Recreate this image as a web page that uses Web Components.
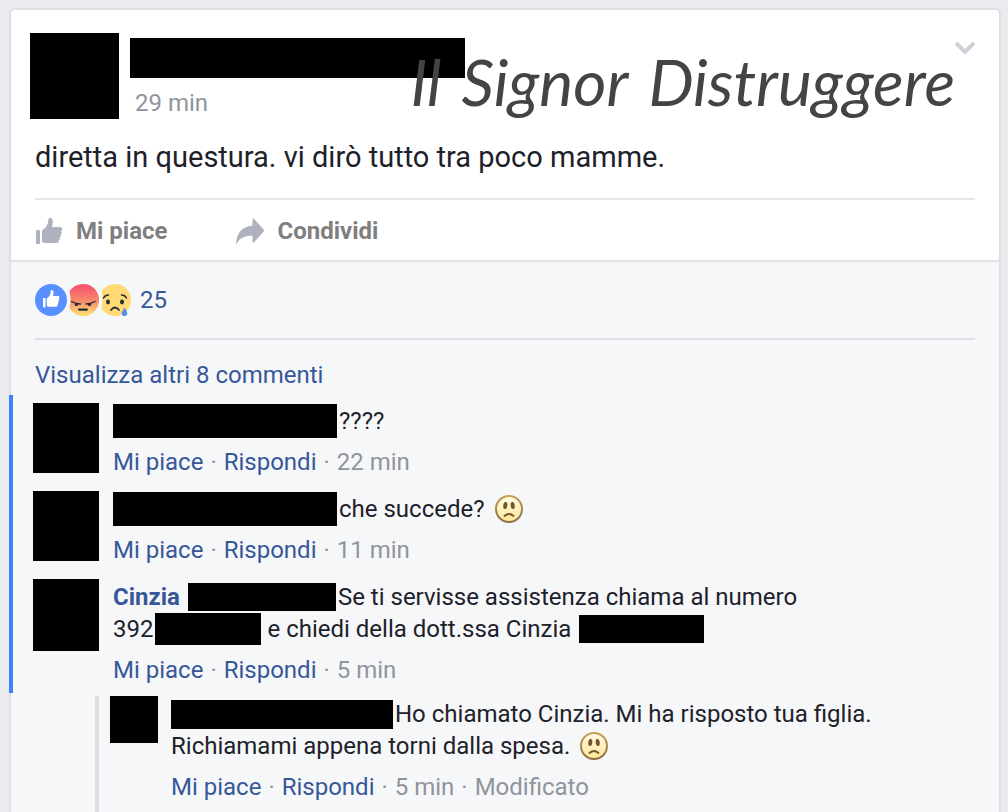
<!DOCTYPE html>
<html lang="it">
<head>
<meta charset="utf-8">
<title>Post</title>
<style>
    body {
        margin: 0;
        min-height: 100vh;
        box-sizing: border-box;
        padding: 8px 7px 0 9px;
        display: flex;
        flex-direction: column;
        background: #e9ebee;
        color: #1d2129;
        font: 24px/32px Roboto, "Liberation Sans", sans-serif;
    }
</style>
</head>
<body>
<post-card>
    <post-header slot="header" time="29 min"></post-header>
    <word-mark slot="mark"><span>Il</span><span>Signor</span><span>Distruggere</span></word-mark>
    <span slot="text">diretta in questura. vi dirò tutto tra poco mamme.</span>
    <post-actions slot="actions"></post-actions>
    <reaction-bar slot="feedback" count="25"></reaction-bar>
    <comment-list slot="feedback">
        <comment-item style="--avatar-h: 70px">
            <comment-line><redacted-box style="--w: 224px; --h: 34px"></redacted-box>????</comment-line>
            <comment-actions slot="actions" time="22 min"></comment-actions>
        </comment-item>
        <comment-item style="--avatar-h: 70px">
            <comment-line><redacted-box style="--w: 224px; --h: 34px"></redacted-box>che succede? <sad-face></sad-face></comment-line>
            <comment-actions slot="actions" time="11 min"></comment-actions>
        </comment-item>
        <comment-item style="--avatar-h: 72px">
            <comment-line><user-link>Cinzia</user-link><redacted-box space="before" style="--w: 148px; --h: 28px"></redacted-box>Se ti servisse assistenza chiama al numero</comment-line>
            <comment-line>392<redacted-box space="after" style="--w: 106px; --h: 32px"></redacted-box>e chiedi della dott.ssa Cinzia<redacted-box space="before" style="--w: 125px; --h: 28px"></redacted-box></comment-line>
            <comment-actions slot="actions" time="5 min"></comment-actions>
        </comment-item>
        <comment-item slot="replies" style="--avatar-w: 48px; --avatar-h: 47px; --gap: 13px">
            <comment-line><redacted-box style="--w: 222px; --h: 29px"></redacted-box>Ho chiamato Cinzia. Mi ha risposto tua figlia.</comment-line>
            <comment-line>Richiamami appena torni dalla spesa. <sad-face></sad-face></comment-line>
            <comment-actions slot="actions" time="5 min" edited></comment-actions>
        </comment-item>
    </comment-list>
</post-card>

<script>
class BaseElement extends HTMLElement {
    constructor(){
        super();
        this.shadowDOM = this.attachShadow({mode: "open"});
    }
    connectedCallback(){
        this.shadowDOM.innerHTML = this.render();
    }
}

const thumb = `
    <rect x="0" y="12" width="4" height="14" rx="1"/>
    <path d="M6 13.5c0-1 .6-1.600 1.500-2.200 2.400-1.700 3.900-3.900 4.400-6.500l.5-3.300C12.600.5 13.200 0 14 0c1.700 0 2.800 1.500 2.800 3.700 0 2-.5 3.700-1.100 5.300H24c1.300 0 2.200.9 2.200 2 0 .9-.5 1.600-1.200 1.900.5.400.8 1 .8 1.600 0 1-.6 1.700-1.400 2 .3.300.5.800.5 1.300 0 .9-.6 1.600-1.300 1.900.2.300.3.700.3 1.100 0 .9-.6 1.600-1.400 1.800.2.300.2.600.2.900 0 .9-.8 1.500-2 1.500H8.500C7 25 6 24 6 22.500z"/>`;

class PostCard extends BaseElement {
    render() {
        return `
        <style>
            :host{
                position: relative;
                flex: 1;
                display: flex;
                flex-direction: column;
                border: 2px solid #dddfe2;
                border-bottom: 0;
                border-radius: 6px 6px 0 0;
                background: #fff;
            }
            .top{
                padding: 23px 24px 0 19px;
            }
            .text{
                margin: 20px 0 0 5px;
                font-size: 29px;
                line-height: 36px;
            }
            .actions{
                margin: 23px 0 0 5px;
                border-top: 2px solid #e5e5e5;
            }
            .feedback{
                flex: 1;
                border-top: 2px solid #e1e2e5;
                background: #f6f7f9;
            }
            .menu{
                position: absolute;
                top: 26px;
                right: 20px;
                width: 28px;
                height: 24px;
                padding: 0;
                border: 0;
                background: none;
            }
        </style>
        <div class="top">
            <slot name="header"></slot>
            <div class="text"><slot name="text"></slot></div>
            <div class="actions"><slot name="actions"></slot></div>
        </div>
        <div class="feedback"><slot name="feedback"></slot></div>
        <slot name="mark"></slot>
        <button class="menu" aria-label="Opzioni">
            <svg width="28" height="24" viewBox="0 0 28 24" fill="none" stroke="#cdd0d6" stroke-width="4"><path d="M5 7l9 9 9-9"/></svg>
        </button>
        `;
    }
}

class PostHeader extends BaseElement {
    render() {
        return `
        <style>
            :host{
                display: flex;
                gap: 11px;
            }
            .avatar{
                width: 89px;
                height: 86px;
                background: #000;
            }
            .name{
                width: 335px;
                height: 40px;
                margin-top: 5px;
                background: #000;
            }
            .time{
                display: block;
                margin: 9px 0 0 5px;
                color: #90949c;
            }
        </style>
        <div class="avatar"></div>
        <div>
            <div class="name"></div>
            <span class="time">${this.getAttribute("time")}</span>
        </div>
        `;
    }
}

class WordMark extends BaseElement {
    render() {
        return `
        <style>
            :host{
                position: absolute;
                top: 36px;
                right: 44px;
                display: flex;
                gap: 20px;
                color: #444;
                font: italic 400 64px/72px Lato, sans-serif;
                white-space: nowrap;
                pointer-events: none;
            }
        </style>
        <slot></slot>
        `;
    }
}

class PostActions extends BaseElement {
    render() {
        return `
        <style>
            :host{
                display: flex;
                gap: 67px;
                height: 61px;
                margin-bottom: -1px;
                align-items: center;
            }
            button{
                display: flex;
                align-items: center;
                gap: 13px;
                padding: 0;
                border: 0;
                background: none;
                color: #7f7f7f;
                font: inherit;
                font-weight: 700;
            }
            svg{
                fill: #adb2bd;
            }
        </style>
        <button><svg width="28" height="26" viewBox="-1 0 28 26">${thumb}</svg>Mi piace</button>
        <button><svg width="30" height="26" viewBox="0 0 30 26"><path d="M17.500 1.500c0-1 .9-1.300 1.600-.6l9.500 10.600c.6.700.6 1.300 0 2L19.100 24.200c-.7.700-1.600.4-1.600-.6v-5.900C9.500 17.500 4.800 20 2 25.300c-.3.500-.9.300-.9-.3C1.600 15 7.500 8.200 17.500 7.400z"/></svg>Condividi</button>
        `;
    }
}

class ReactionBar extends BaseElement {
    render() {
        return `
        <style>
            :host{
                display: flex;
                align-items: center;
                height: 76px;
                margin: 0 24px;
                border-bottom: 2px solid #dfe1e5;
            }
            a{
                margin-left: 9px;
                color: #365899;
                text-decoration: none;
            }
        </style>
        <svg width="32" height="32" viewBox="0 0 32 32">
            <circle cx="16" cy="16" r="16" fill="#5890ff"/>
            <g fill="#fff" transform="translate(8 6) scale(.63 .67)">${thumb}</g>
        </svg>
        <svg width="32" height="32" viewBox="0 0 32 32">
            <defs><linearGradient id="red" x2="0" y2="1"><stop offset=".1" stop-color="#f7576b"/><stop offset=".55" stop-color="#f98d6c"/><stop offset=".9" stop-color="#ffd572"/></linearGradient></defs>
            <path d="M2.500 7.500A16 16 0 1 1 2.500 24.500Q4.500 16 2.500 7.500z" fill="url(#red)"/>
            <path d="M4.500 17.500q4.500 2.500 9 2.500M28 17.500q-4.500 2.500-9 2.500" fill="none" stroke="#262c38" stroke-width="1.400" stroke-linecap="round"/>
            <ellipse cx="9.500" cy="20.500" rx="1.700" ry="1.600" fill="#262c38"/>
            <ellipse cx="22.500" cy="20.500" rx="1.700" ry="1.600" fill="#262c38"/>
            <rect x="11" y="24.500" width="10" height="2.200" rx="1.100" fill="#262c38"/>
        </svg>
        <svg width="32" height="32" viewBox="0 0 32 32">
            <path d="M2.500 7.500A16 16 0 1 1 2.500 24.500Q4.500 16 2.500 7.500z" fill="#ffda75"/>
            <path d="M4.500 14q1.500-3 5-3M27.500 14q-1.500-3-5-3" fill="none" stroke="#262c38" stroke-width="1.500" stroke-linecap="round"/>
            <ellipse cx="9" cy="18" rx="2" ry="2.400" fill="#262c38"/>
            <ellipse cx="23" cy="18" rx="2" ry="2.400" fill="#262c38"/>
            <path d="M12 26q4-5 8 0" fill="none" stroke="#262c38" stroke-width="1.800" stroke-linecap="round"/>
            <path d="M25.500 23.500c1.800 3 2.800 4.200 2.800 5.700a2.800 2.800 0 0 1-5.600 0c0-1.500 1-2.700 2.800-5.700z" fill="#5890e8"/>
        </svg>
        <a href="#">${this.getAttribute("count")}</a>
        `;
    }
}

class CommentList extends BaseElement {
    render() {
        return `
        <style>
            :host{
                display: block;
                padding-top: 19px;
            }
            .more{
                display: block;
                margin-left: 24px;
                color: #365899;
                text-decoration: none;
            }
            .unread{
                display: flex;
                flex-direction: column;
                gap: 13px;
                margin: 4px 0 0 -2px;
                padding: 8px 24px 7px 20px;
                border-left: 4px solid #4080ff;
            }
            .replies{
                margin: 3px 24px 0 84px;
                padding: 0 0 24px 11px;
                border-left: 4px solid #dddfe2;
            }
        </style>
        <a class="more" href="#">Visualizza altri 8 commenti</a>
        <div class="unread"><slot></slot></div>
        <div class="replies"><slot name="replies"></slot></div>
        `;
    }
}

class CommentItem extends BaseElement {
    render() {
        return `
        <style>
            :host{
                display: flex;
                gap: var(--gap, 14px);
            }
            .avatar{
                flex: none;
                width: var(--avatar-w, 66px);
                height: var(--avatar-h);
                background: #000;
            }
            .body{
                padding-top: 2px;
            }
            .actions{
                margin-top: 9px;
            }
        </style>
        <div class="avatar"></div>
        <div class="body">
            <slot></slot>
            <div class="actions"><slot name="actions"></slot></div>
        </div>
        `;
    }
}

class CommentLine extends BaseElement {
    render() {
        return `
        <style>
            :host{
                display: flex;
                align-items: center;
                height: 32px;
                gap: 2px;
                white-space: nowrap;
            }
        </style>
        <slot></slot>
        `;
    }
}

class CommentActions extends BaseElement {
    render() {
        const edited = this.hasAttribute("edited") ? "<span>·</span><span>Modificato</span>" : "";
        return `
        <style>
            :host{
                display: flex;
                gap: 7px;
                color: #90949c;
            }
            a{
                color: #365899;
                text-decoration: none;
            }
        </style>
        <a href="#">Mi piace</a><span>·</span><a href="#">Rispondi</a><span>·</span><span>${this.getAttribute("time")}</span>${edited}
        `;
    }
}

class UserLink extends BaseElement {
    render() {
        return `
        <style>
            a{
                color: #365899;
                font-weight: 700;
                text-decoration: none;
            }
        </style>
        <a href="#"><slot></slot></a>
        `;
    }
}

class RedactedBox extends BaseElement {
    render() {
        return `
        <style>
            :host{
                flex: none;
                width: var(--w);
                height: var(--h);
                background: #000;
            }
            :host([space="before"]){
                margin-left: 6px;
            }
            :host([space="after"]){
                margin-right: 4px;
            }
        </style>
        `;
    }
}

class SadFace extends BaseElement {
    render() {
        return `
        <style>
            :host{
                display: flex;
                margin-left: 8px;
            }
        </style>
        <svg width="28" height="28" viewBox="0 0 28 28">
            <defs>
                <linearGradient id="face" x2="0" y2="1"><stop stop-color="#fffbe9"/><stop offset="1" stop-color="#fbe796"/></linearGradient>
                <linearGradient id="edge" x2="0" y2="1"><stop stop-color="#c9a254"/><stop offset="1" stop-color="#8c6d47"/></linearGradient>
            </defs>
            <circle cx="14" cy="14" r="13" fill="url(#face)" stroke="url(#edge)" stroke-width="2"/>
            <ellipse cx="10.300" cy="10.500" rx="2" ry="3.500" fill="#765426" transform="rotate(8 10.300 10.500)"/>
            <ellipse cx="17.700" cy="10.500" rx="2" ry="3.500" fill="#765426" transform="rotate(-8 17.700 10.500)"/>
            <path d="M9.500 21q4.500-4 9 0" fill="none" stroke="#765426" stroke-width="1.800" stroke-linecap="round"/>
        </svg>
        `;
    }
}

customElements.define("post-card", PostCard);
customElements.define("post-header", PostHeader);
customElements.define("word-mark", WordMark);
customElements.define("post-actions", PostActions);
customElements.define("reaction-bar", ReactionBar);
customElements.define("comment-list", CommentList);
customElements.define("comment-item", CommentItem);
customElements.define("comment-line", CommentLine);
customElements.define("comment-actions", CommentActions);
customElements.define("user-link", UserLink);
customElements.define("redacted-box", RedactedBox);
customElements.define("sad-face", SadFace);
</script>
</body>
</html>
